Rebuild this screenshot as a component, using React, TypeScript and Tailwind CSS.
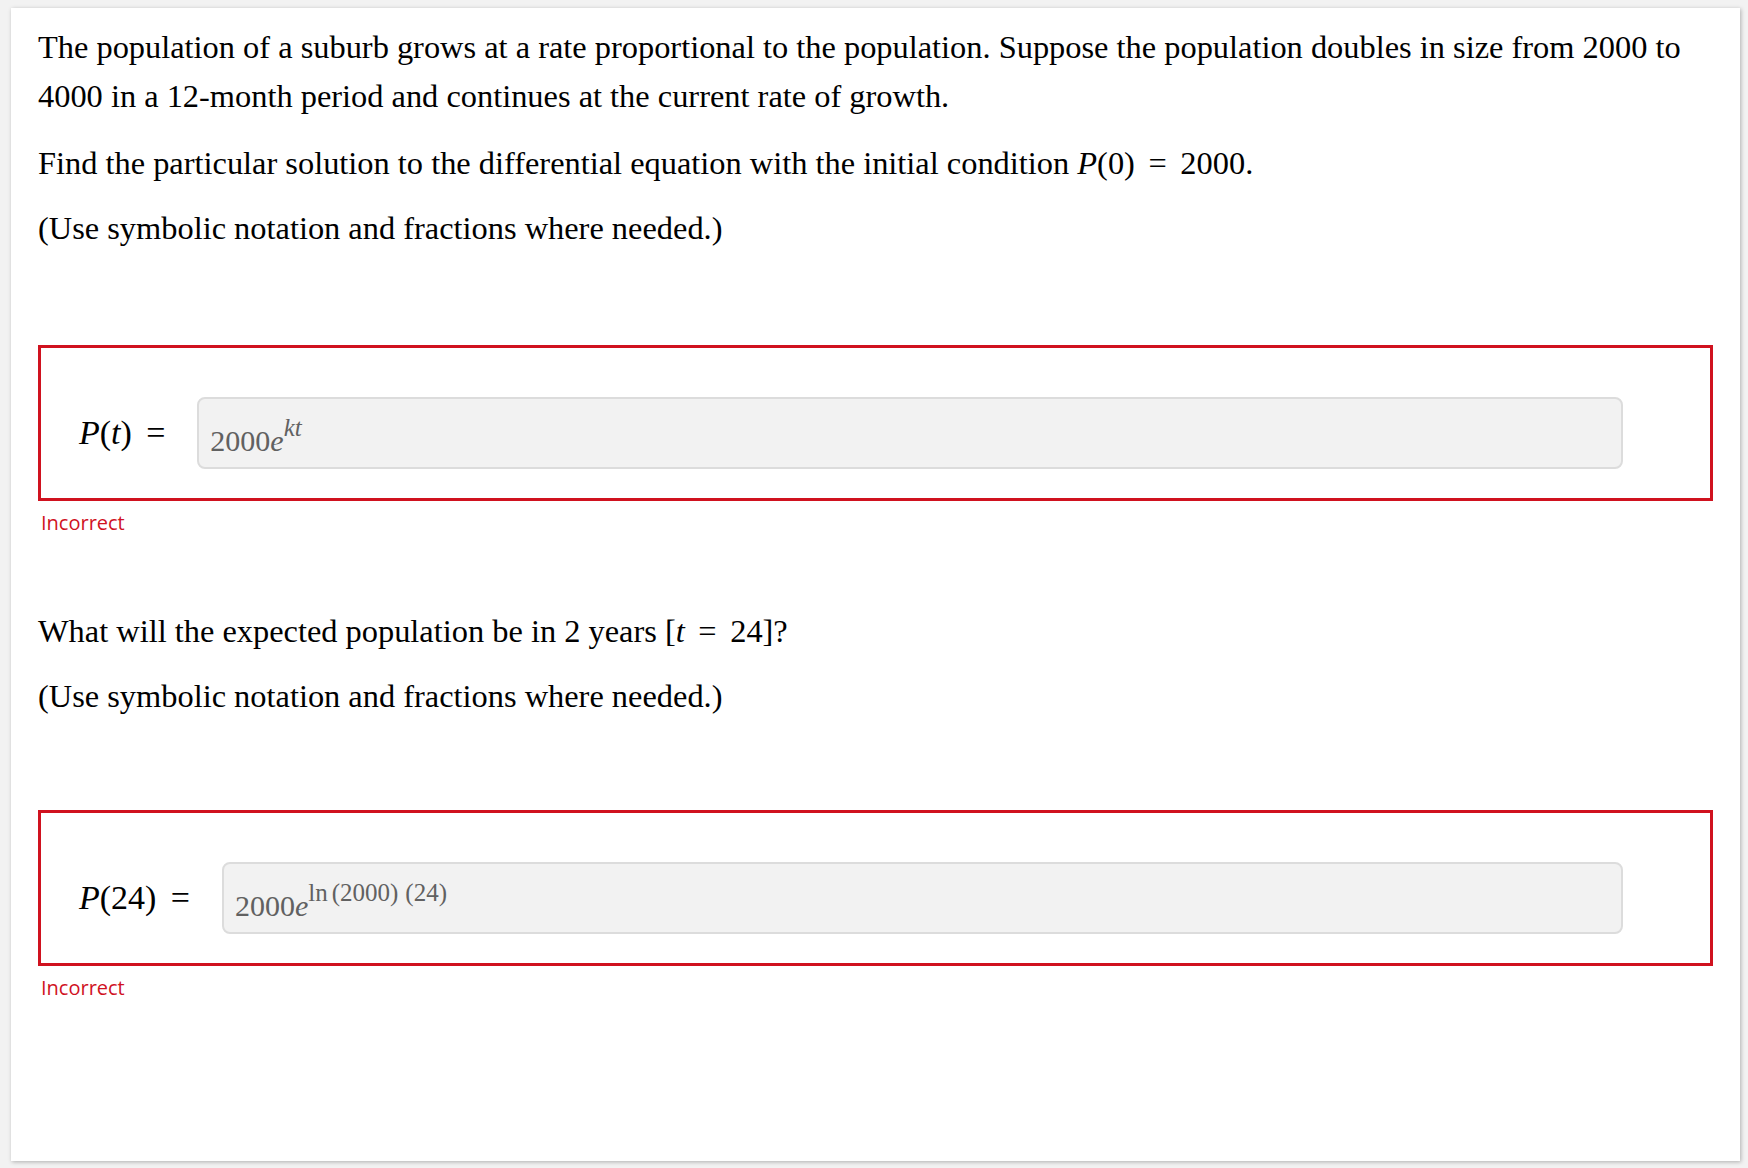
import React from "react";

// math helpers: italic variable + raised exponent
const Var = ({ children }: { children: React.ReactNode }) => (
  <span className="italic">{children}</span>
);

const Eq = () => <span className="mx-[0.42em]">=</span>;

const Sup = ({ children }: { children: React.ReactNode }) => (
  <span className="text-[25px] leading-[0] align-[15px]">{children}</span>
);

function AnswerBox({
  label,
  value,
  className = "",
}: {
  label: React.ReactNode;
  value: React.ReactNode;
  className?: string;
}) {
  return (
    <div className={className}>
      <div className="border-[3px] border-[#d0121f] pl-[38px] pr-[87px] pt-[49px] pb-[29px]">
        <div className="flex items-center gap-8">
          <div className="text-[34px] leading-[40px] whitespace-nowrap">
            {label}
            <span className="ml-[0.42em]">=</span>
          </div>
          <div className="flex-1 h-[72px] rounded-[8px] border-2 border-[#dcdcdc] bg-[#f2f2f2] pl-[11px] pt-[22px] text-[30px] leading-[40px] text-[#616161]">
            {value}
          </div>
        </div>
      </div>
      <p className="mt-[9px] font-['Open_Sans',sans-serif] font-medium text-[20px] leading-[26px] text-[#d0121f] pl-[3px]">
        Incorrect
      </p>
    </div>
  );
}

export default function App() {
  return (
    <div className="min-h-screen bg-[#f2f2f2] pl-[11px] pr-[8px] pt-[8px] pb-[7px]">
      <div className="h-[1153px] bg-white px-[27px] pt-[15px] shadow-[1px_1px_4px_rgba(0,0,0,0.28)] font-['Liberation_Serif',serif] text-[32.4px] leading-[49px] text-black">
        <p>
          The population of a suburb grows at a rate proportional to the population. Suppose the
          population doubles in size from 2000 to 4000 in a 12-month period and continues at the
          current rate of growth.
        </p>
        <p className="mt-[18px]">
          Find the particular solution to the differential equation with the initial condition{" "}
          <Var>P</Var>(0)
          <Eq />
          2000.
        </p>
        <p className="mt-[16px]">(Use symbolic notation and fractions where needed.)</p>

        <AnswerBox
          className="mt-[92px]"
          label={
            <>
              <Var>P</Var>(<Var>t</Var>)
            </>
          }
          value={
            <>
              2000<Var>e</Var>
              <Sup>
                <Var>kt</Var>
              </Sup>
            </>
          }
        />

        <p className="mt-[71px]">
          What will the expected population be in 2 years [<Var>t</Var>
          <Eq />
          24]?
        </p>
        <p className="mt-[16px]">(Use symbolic notation and fractions where needed.)</p>

        <AnswerBox
          className="mt-[89px]"
          label={
            <>
              <Var>P</Var>(24)
            </>
          }
          value={
            <>
              2000<Var>e</Var>
              <Sup>
                ln<span className="ml-[4px]">(2000)</span>
                <span className="ml-[7px]">(24)</span>
              </Sup>
            </>
          }
        />
      </div>
    </div>
  );
}
